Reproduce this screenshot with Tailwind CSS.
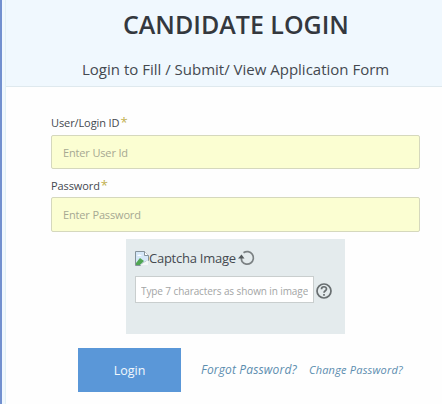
<!DOCTYPE html>
<html lang="en"><head><meta charset="utf-8"><title>Candidate Login</title>
<script src="https://cdn.jsdelivr.net/npm/@tailwindcss/browser@4"></script></head>
<body class="w-[442px] h-[404px] overflow-hidden bg-[#f0f8fe] font-['Open_Sans','Noto_Sans',sans-serif] text-[#444950]">
<div class="flex h-[404px] border-l-2 border-[#7290cf]">
<main class="ml-[3px] flex-1 border-l border-[#e2f0f4] bg-[#fefefe]">
  <header class="flex h-[87px] flex-col items-start border-b border-[#dfe9ee] bg-[#f0f8fe] whitespace-nowrap">
    <h1 class="ml-[117px] mt-[8px] h-8 text-[25px] leading-8 font-semibold text-[#34383e]">CANDIDATE LOGIN</h1>
    <p class="ml-[76px] mt-[19px] h-5 text-[15px] leading-5">Login to Fill / Submit/ View Application Form</p>
  </header>
  <form class="pl-[45px]">
    <label class="mt-[27px] block h-4 text-[11px] leading-4 tracking-[-0.1px] whitespace-nowrap">User/Login ID<span class="ml-px text-[13px] text-[#c2b04e]">*</span></label>
    <input class="mt-[5px] block h-[34px] w-[369px] rounded-xs border border-[#d5d8bd] bg-[#fbfed2] px-[11px] text-[11px] tracking-[-0.15px] placeholder:text-[#a6a892]" placeholder="Enter User Id">
    <label class="mt-[8px] block h-4 text-[11px] leading-4 tracking-[-0.1px] whitespace-nowrap">Password<span class="ml-px text-[13px] text-[#c2b04e]">*</span></label>
    <input class="mt-[4px] block h-[35px] w-[369px] rounded-xs border border-[#d5d8bd] bg-[#fbfed2] px-[11px] text-[11px] tracking-[-0.15px] placeholder:text-[#a6a892]" placeholder="Enter Password">
    <section class="mt-[7px] ml-[75px] h-[95px] w-[219px] bg-[#e4ebed] pt-[9px] pl-[9px]">
      <div class="flex h-5 items-center whitespace-nowrap">
        <svg class="h-[15px] w-[14px]" viewBox="0 0 14 15"><path d="M.5.5h9l4 4v5L10 11l-5 3.500H.5z" fill="#d6e8f8" stroke="#85939b"/><path d="M9.500.5v4h4" fill="#fff" stroke="#85939b"/><path d="M1 12l4-5 4 3-4 4H1z" fill="#51a653"/><path d="M2 5q2-3 5 0z" fill="#fff"/><path d="M5 14l8-5v5z" fill="#f5f8f8"/></svg>
        <span class="text-[13px] leading-5 tracking-[-0.25px]">Captcha Image</span>
        <svg class="ml-0.5 h-4 w-[17px]" viewBox="0 0 17 16" fill="none"><path d="M5.500 2.700A6.300 6.300 0 1 1 4 11.500Q3.300 10 3.300 7" stroke="#7b8183" stroke-width="1.700"/><path d="M0 8.500l3.500-4L6.500 8.500z" fill="#555b5d"/></svg>
      </div>
      <div class="mt-2 flex items-center">
        <input class="h-[27px] w-[179px] border border-[#c9cece] bg-white px-[5px] pt-0.5 text-[10px] tracking-[-0.1px] placeholder:text-[#a3a5a5]" placeholder="Type 7 characters as shown in image">
        <svg class="mt-0.5 ml-0.5 size-4" viewBox="0 0 16 16" fill="none" stroke="#686e70" stroke-width="1.700"><circle cx="8" cy="8" r="7"/><path d="M5.500 6.200C5.500 3 10.500 3 10.500 6c0 1.800-2.500 1.700-2.500 3.700M8 11v1.700"/></svg>
      </div>
    </section>
    <div class="mt-[14px] ml-[27px] flex items-center whitespace-nowrap">
      <button class="h-11 w-[103px] bg-[#5a97d8] pt-0.5 text-[12.5px] text-[#f2f8fd]">Login</button>
      <a class="ml-5 w-[108px] text-[12px] tracking-[0.15px] italic text-[#5c8daf]">Forgot Password?</a>
      <a class="text-[11px] tracking-[0.2px] italic text-[#5c8daf]">Change Password?</a>
    </div>
  </form>
</main></div>
</body></html>
